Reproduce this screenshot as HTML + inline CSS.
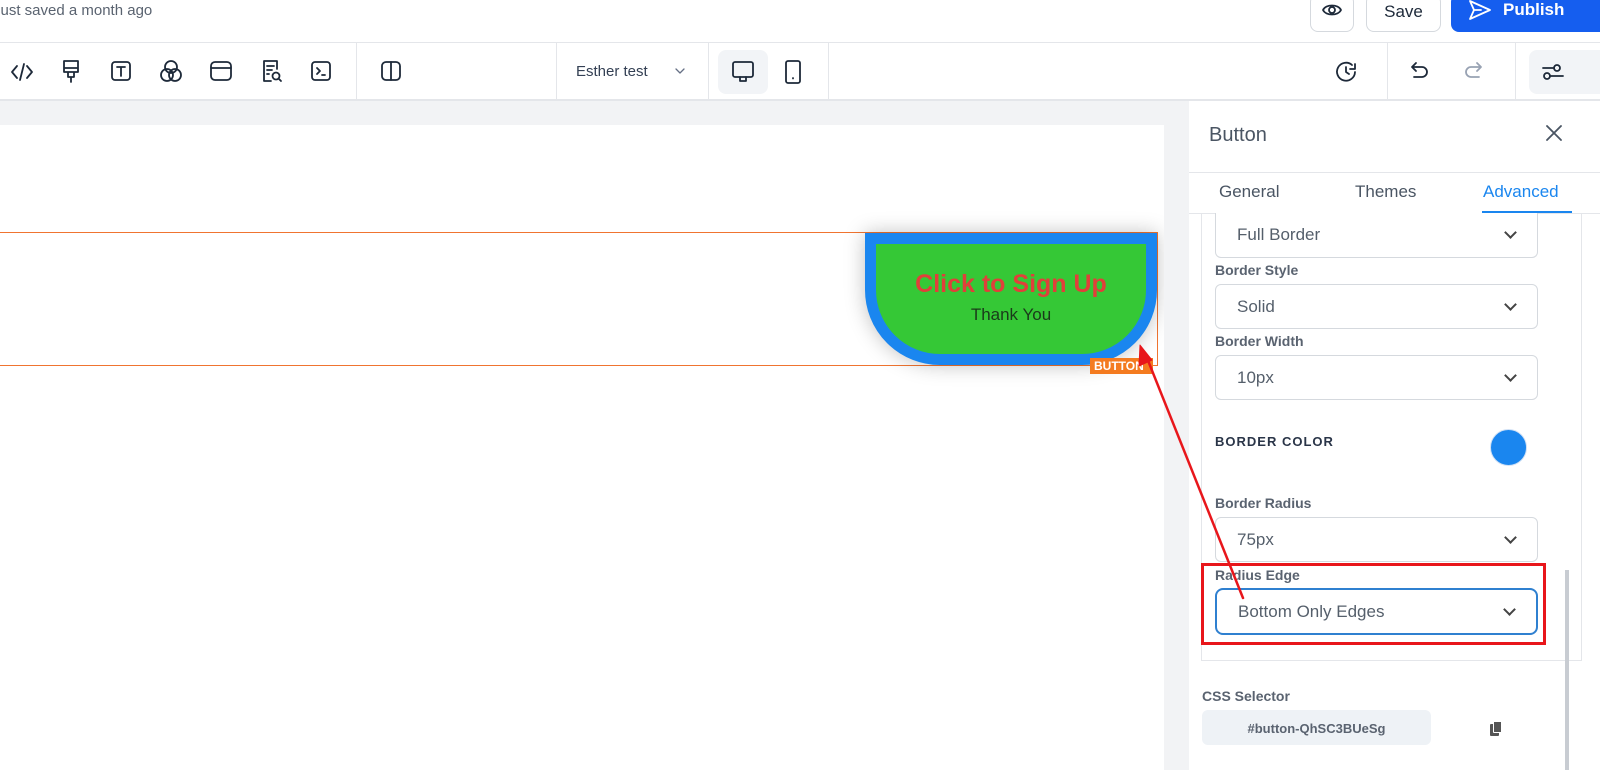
<!DOCTYPE html>
<html><head><style>
*{box-sizing:border-box;margin:0;padding:0}
body{width:1600px;height:770px;overflow:hidden;background:#f2f3f5;font-family:"Liberation Sans",sans-serif;position:relative}
.a{position:absolute}
svg{position:absolute;fill:none;stroke:#1d2939;stroke-width:1.8;stroke-linecap:round;stroke-linejoin:round}
.field{position:absolute;left:1215px;width:323px;height:45px;border:1px solid #d5d9de;border-radius:6px;background:#fff;font-size:17px;color:#555f6b;padding:12px 0 0 21px}
.field:after{content:"";position:absolute;right:22px;top:15px;width:7px;height:7px;border-right:2px solid #444;border-bottom:2px solid #444;transform:rotate(45deg)}
.lbl{position:absolute;left:1215px;font-size:14px;font-weight:bold;color:#5a6370}
</style></head><body>
<div class="a" style="left:0;top:0;width:1600px;height:43px;background:#fff;border-bottom:1px solid #e4e6ea"></div>
<div class="a" style="left:-7px;top:2px;font-size:15px;color:#5a6370">Just saved a month ago</div>
<div class="a" style="left:1310px;top:-6px;width:44px;height:38px;border:1px solid #d5d9de;border-radius:8px;background:#fff"></div>
<svg style="left:1321px;top:1px" width="22" height="18" viewBox="0 0 22 18"><path d="M2 9C5 3 17 3 20 9C17 15 5 15 2 9Z"/><circle cx="11" cy="9" r="3"/></svg>
<div class="a" style="left:1366px;top:-6px;width:75px;height:38px;border:1px solid #d5d9de;border-radius:8px;background:#fff;font-size:17px;color:#1d2939;text-align:center;padding-top:7px">Save</div>
<div class="a" style="left:1451px;top:-6px;width:160px;height:38px;border-radius:8px;background:#155eef;color:#fff;font-size:17px;font-weight:bold;padding:6px 0 0 52px">Publish</div>
<svg style="left:1468px;top:-1px;stroke:#fff" width="24" height="22" viewBox="0 0 24 22"><path d="M2 2L22 11L2 20L6 11Z M6 11H13"/></svg>

<div class="a" style="left:0;top:43px;width:1600px;height:58px;background:#fff;border-bottom:2px solid #e4e6ea"></div>
<svg style="left:10px;top:61px" width="24" height="22" viewBox="0 0 24 22"><path d="M7 5L2 11L7 17M17 5L22 11L17 17M14 3L10 19"/></svg>
<svg style="left:61px;top:59px" width="20" height="26" viewBox="0 0 20 26"><path d="M3 2H17V13H3Z M3 9H17 M7 13V18H13V13 M10 18V23"/></svg>
<svg style="left:110px;top:60px" width="22" height="22" viewBox="0 0 22 22"><rect x="2" y="2" width="18" height="18" rx="3"/><path d="M7 7H15M11 7V16"/></svg>
<svg style="left:159px;top:59px" width="24" height="26" viewBox="0 0 24 26"><circle cx="12" cy="8" r="6"/><circle cx="8" cy="16" r="6"/><circle cx="16" cy="16" r="6"/></svg>
<svg style="left:209px;top:60px" width="24" height="22" viewBox="0 0 24 22"><rect x="2" y="2" width="20" height="18" rx="4"/><path d="M2 8H22"/></svg>
<svg style="left:260px;top:59px" width="24" height="26" viewBox="0 0 24 26"><path d="M11 22H4V2H17V10 M7 7H14M7 11H12M7 15H9"/><circle cx="16" cy="17" r="3.5"/><path d="M18.5 19.5L21 22"/></svg>
<svg style="left:310px;top:60px" width="22" height="22" viewBox="0 0 22 22"><rect x="2" y="2" width="18" height="18" rx="3"/><path d="M7 8L10 11L7 14M12 15H15"/></svg>
<div class="a" style="left:356px;top:43px;width:1px;height:57px;background:#e4e6ea"></div>
<svg style="left:380px;top:60px" width="22" height="22" viewBox="0 0 22 22"><rect x="2" y="2" width="18" height="18" rx="4"/><path d="M11 2V20"/></svg>
<div class="a" style="left:556px;top:43px;width:1px;height:57px;background:#e4e6ea"></div>
<div class="a" style="left:576px;top:63px;font-size:15px;color:#344054">Esther test</div>
<svg style="left:674px;top:66px;stroke-width:1.3;stroke:#667085" width="12" height="10" viewBox="0 0 12 10"><path d="M2 3L6 7L10 3"/></svg>
<div class="a" style="left:708px;top:43px;width:1px;height:57px;background:#e4e6ea"></div>
<div class="a" style="left:718px;top:50px;width:50px;height:44px;border-radius:8px;background:#f2f4f7"></div>
<svg style="left:731px;top:60px" width="24" height="24" viewBox="0 0 24 24"><rect x="2" y="2" width="20" height="15" rx="2"/><path d="M9 17V21H15V17"/></svg>
<svg style="left:784px;top:59px" width="18" height="26" viewBox="0 0 18 26"><rect x="2" y="2" width="14" height="22" rx="2"/><path d="M9 19V19.5"/></svg>
<div class="a" style="left:828px;top:43px;width:1px;height:57px;background:#e4e6ea"></div>
<svg style="left:1335px;top:60px" width="26" height="24" viewBox="0 0 26 24"><path d="M20 12A9 9 0 1 1 17 5M20 4V9H15M11 7V12L14 14"/></svg>
<div class="a" style="left:1387px;top:43px;width:1px;height:57px;background:#e4e6ea"></div>
<svg style="left:1409px;top:60px" width="24" height="22" viewBox="0 0 24 22"><path d="M7 3L3 7L7 11M3 7H13A5 5 0 0 1 13 17H5"/></svg>
<svg style="left:1460px;top:60px;stroke:#98a2b3" width="24" height="22" viewBox="0 0 24 22"><path d="M17 3L21 7L17 11M21 7H11A5 5 0 0 0 11 17H19"/></svg>
<div class="a" style="left:1515px;top:43px;width:1px;height:57px;background:#e4e6ea"></div>
<div class="a" style="left:1529px;top:50px;width:80px;height:44px;border-radius:8px;background:#f2f4f7"></div>
<svg style="left:1540px;top:60px" width="26" height="24" viewBox="0 0 26 24"><circle cx="17" cy="8" r="3"/><circle cx="7" cy="16" r="3"/><path d="M3 8H14M10 16H23"/></svg>

<div class="a" style="left:0;top:125px;width:1164px;height:645px;background:#fff"></div>
<div class="a" style="left:-2px;top:232px;width:1160px;height:134px;border:1px solid #f07430"></div>
<div class="a" style="left:865px;top:233px;width:292px;height:132px;background:#35c836;border:11px solid #1a86ef;border-radius:0 0 75px 75px;box-shadow:0 0 20px rgba(0,0,0,.25);text-align:center">
<div style="font-size:25px;font-weight:bold;color:#e0403a;margin-top:26px">Click to Sign Up</div>
<div style="font-size:17px;color:#1a3a1a;margin-top:6px">Thank You</div></div>
<div class="a" style="left:1090px;top:358px;width:63px;height:16px;background:#f47b20;color:#fff;font-size:12px;font-weight:bold;padding:1px 0 0 4px">BUTTON</div>

<div class="a" style="left:1189px;top:101px;width:411px;height:669px;background:#fff"></div>
<div class="a" style="left:1209px;top:124px;font-size:20px;color:#4a5563">Button</div>
<svg style="left:1545px;top:124px;stroke:#4a5563" width="18" height="18" viewBox="0 0 18 18"><path d="M2 2L16 16M16 2L2 16"/></svg>
<div class="a" style="left:1189px;top:172px;width:411px;height:1px;background:#e4e6ea"></div>
<div class="a" style="left:1219px;top:182px;font-size:17px;color:#4a5563">General</div>
<div class="a" style="left:1355px;top:182px;font-size:17px;color:#4a5563">Themes</div>
<div class="a" style="left:1483px;top:182px;font-size:17px;color:#1a86ef">Advanced</div>
<div class="a" style="left:1189px;top:213px;width:411px;height:1px;background:#e4e6ea"></div>
<div class="a" style="left:1482px;top:211px;width:90px;height:2px;background:#1a86ef"></div>
<div class="a" style="left:1201px;top:214px;width:381px;height:447px;border:1px solid #e4e6ea;border-top:none"></div>
<div class="field" style="top:213px;border-top:none;border-radius:0 0 6px 6px;padding-top:12px">Full Border</div>
<div class="lbl" style="top:262px">Border Style</div>
<div class="field" style="top:284px">Solid</div>
<div class="lbl" style="top:333px">Border Width</div>
<div class="field" style="top:355px">10px</div>
<div class="a" style="left:1215px;top:434px;font-size:13px;font-weight:bold;color:#2a3548;letter-spacing:1px">BORDER COLOR</div>
<div class="a" style="left:1490px;top:429px;width:37px;height:37px;border-radius:50%;background:#1a86ef;border:1px solid #cfe0f5"></div>
<div class="lbl" style="top:495px">Border Radius</div>
<div class="field" style="top:517px">75px</div>
<div class="lbl" style="top:567px">Radius Edge</div>
<div class="field" style="top:588px;height:47px;border:2px solid #2f80d0;border-radius:8px">Bottom Only Edges</div>
<div class="a" style="left:1201px;top:563px;width:345px;height:82px;border:3px solid #e8161b"></div>
<div class="a" style="left:1202px;top:688px;font-size:14px;font-weight:bold;color:#5a6370">CSS Selector</div>
<div class="a" style="left:1202px;top:710px;width:229px;height:35px;border-radius:6px;background:#eef2f6;font-size:13px;font-weight:bold;color:#5a6370;text-align:center;padding-top:11px">#button-QhSC3BUeSg</div>
<div class="a" style="left:1490px;top:724px;width:9px;height:12px;background:#555;border-radius:1px"></div>
<div class="a" style="left:1493px;top:721px;width:9px;height:12px;background:#555;border:1px solid #fff;border-radius:1px"></div>
<div class="a" style="left:1565px;top:570px;width:4px;height:200px;background:#c8ccd2"></div>
<div class="a" style="left:1164px;top:101px;width:25px;height:669px;background:#f2f3f5"></div>

<svg style="left:0;top:0;stroke:#e8161b;stroke-width:2.5" width="1600" height="770"><path d="M1243 598L1145 353"/><path d="M1140 345L1139 366L1152 360Z" fill="#e8161b" stroke-width="1"/></svg>
</body></html>
